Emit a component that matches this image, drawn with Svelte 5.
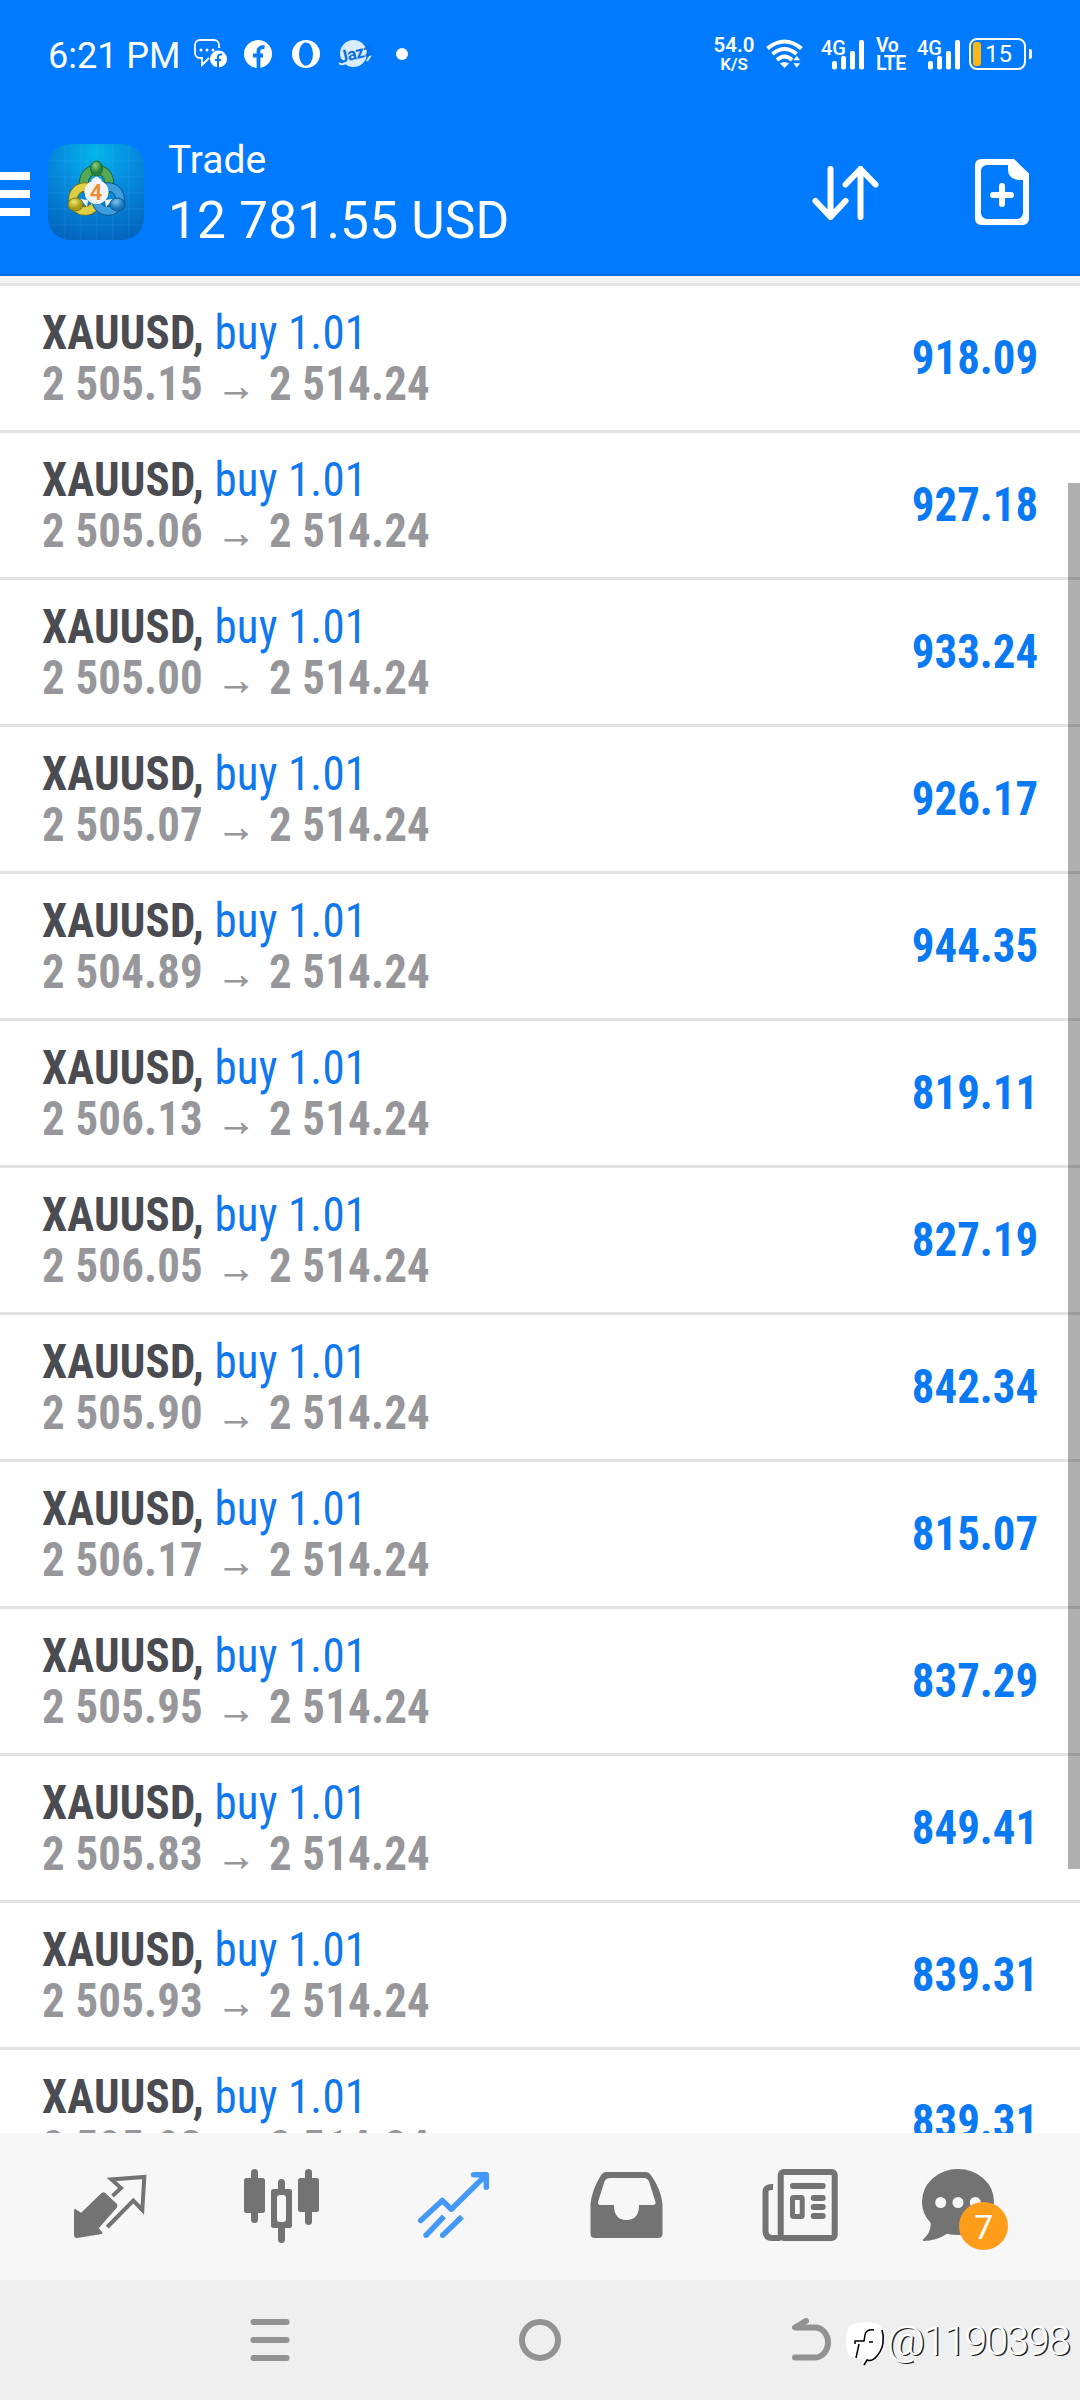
<script lang="ts">
  interface Position {
    symbol: string;
    side: string;
    open: string;
    current: string;
    profit: string;
  }

  const balance = '12 781.55 USD';
  const unread = 7;

  const rows: [string, string][] = [
    ['2 505.15', '918.09'],
    ['2 505.06', '927.18'],
    ['2 505.00', '933.24'],
    ['2 505.07', '926.17'],
    ['2 504.89', '944.35'],
    ['2 506.13', '819.11'],
    ['2 506.05', '827.19'],
    ['2 505.90', '842.34'],
    ['2 506.17', '815.07'],
    ['2 505.95', '837.29'],
    ['2 505.83', '849.41'],
    ['2 505.93', '839.31'],
    ['2 505.93', '839.31']
  ];

  const positions: Position[] = rows.map(([open, profit]) => ({
    symbol: 'XAUUSD',
    side: 'buy 1.01',
    open,
    current: '2 514.24',
    profit
  }));
</script>

{#snippet signal()}
  <div class="signal">
    <span>4G</span>
    <svg width="32" height="30" viewBox="0 0 32 30" fill="#fff">
      <rect x="0" y="21" width="5" height="8.5" rx="2" />
      <rect x="9" y="16" width="5" height="13.5" rx="2" />
      <rect x="18" y="11" width="5" height="18.5" rx="2" />
      <rect x="27" y="0" width="5" height="29.5" rx="2" />
    </svg>
  </div>
{/snippet}

<div class="screen">
  <div class="status">
    <span class="time">6:21 PM</span>
    <svg class="s-chat" width="34" height="30" viewBox="0 0 34 30">
      <path d="M25 9V6a5 5 0 0 0-5-5H6a5 5 0 0 0-5 5v8a5 5 0 0 0 5 5h2v7l7-7" fill="none" stroke="#fff" stroke-width="1.8" />
      <g fill="#fff">
        <circle cx="7" cy="11" r="1.5" />
        <circle cx="13" cy="11" r="1.5" />
        <circle cx="19" cy="11" r="1.5" />
        <circle cx="24.5" cy="20" r="8.5" />
      </g>
      <path d="M24 29V18q0-3 4-2.5M21 21h6" fill="none" stroke="#007aff" stroke-width="2" />
    </svg>
    <svg class="s-fb" width="28" height="28" viewBox="0 0 28 28">
      <circle cx="14" cy="14" r="14" fill="#fff" />
      <path d="M14.5 28V11.5q0-5 6-4.2M9 15.5h10" fill="none" stroke="#007aff" stroke-width="3.8" />
    </svg>
    <svg class="s-opera" width="28" height="28" viewBox="0 0 28 28">
      <circle cx="14" cy="14" r="14" fill="#fff" />
      <ellipse cx="14" cy="14" rx="7" ry="11.5" fill="#007aff" />
    </svg>
    <svg class="s-jazz" width="34" height="30" viewBox="0 0 34 30">
      <circle cx="15.5" cy="14.5" r="13.5" fill="#d9ecff" />
      <path d="M1 24q4 3 7-1M29 22l4-6" fill="none" stroke="#d9ecff" stroke-width="2" />
      <text x="2" y="24" transform="rotate(-14 3 24)">Jazz</text>
    </svg>
    <svg class="s-dot" width="12" height="12" viewBox="0 0 12 12"><circle cx="6" cy="6" r="6" fill="#fff" /></svg>

    <div class="speed"><b>54.0</b><span>K/S</span></div>
    <svg class="wifi" width="38" height="30" viewBox="0 0 38 30">
      <g fill="none" stroke="#fff" stroke-width="4">
        <path d="M1.5 9.5Q18.5-4.5 35.5 9.5" />
        <path d="M6.5 15Q18.5 5 30.5 15" />
        <path d="M11 21Q18.5 14 26 21" />
      </g>
      <path d="M14 24.5q4.5-3 9 0L18.5 29z" fill="#fff" />
      <path d="M27 21.5l3.8-5 3.7 5zM27 24l3.8 5 3.7-5z" fill="#fff" stroke="#007aff" stroke-width=".5" />
    </svg>
    {@render signal()}
    <div class="volte"><span>Vo</span><span>LTE</span></div>
    {@render signal()}
    <div class="battery"><i></i><span>15</span></div>
    <div class="nub"></div>
  </div>

  <header>
    <div class="menu"><i></i><i></i><i></i></div>
    <svg class="logo" width="96" height="96" viewBox="0 0 96 96">
      <defs>
        <radialGradient id="bg" cx=".5" cy=".1" r=".95">
          <stop offset="0" stop-color="#04b5ea" />
          <stop offset=".4" stop-color="#058edf" />
          <stop offset="1" stop-color="#0363bd" />
        </radialGradient>
        <radialGradient id="green" cx=".4" cy=".3"><stop offset="0" stop-color="#8fd07c" /><stop offset="1" stop-color="#23813a" /></radialGradient>
        <radialGradient id="yellow" cx=".4" cy=".3"><stop offset="0" stop-color="#f3ea6a" /><stop offset="1" stop-color="#a99b17" /></radialGradient>
        <radialGradient id="blue" cx=".4" cy=".3"><stop offset="0" stop-color="#7cc8f4" /><stop offset="1" stop-color="#1873b8" /></radialGradient>
      </defs>
      <rect width="96" height="96" rx="22" fill="url(#bg)" />
      <path d="M17 1v94M33 0v96M49 0v96M65 0v96M81 1v94M1 17h94M0 33h96M0 49h96M0 65h96M1 81h94" stroke="#6fd0ff" stroke-opacity=".15" />
      <g fill="none">
        <circle cx="48.5" cy="38" r="12.5" stroke="#1d6b31" stroke-width="10" />
        <circle cx="48.5" cy="38" r="12.5" stroke="#53a955" stroke-width="8" />
        <circle cx="37" cy="55" r="12" stroke="#7f7612" stroke-width="9.5" />
        <circle cx="37" cy="55" r="12" stroke="#dccf45" stroke-width="7.5" />
        <circle cx="60" cy="55" r="12" stroke="#0d5592" stroke-width="9.5" />
        <circle cx="60" cy="55" r="12" stroke="#3d9fdd" stroke-width="7.5" />
      </g>
      <path d="M43 36l5.5-4 5.5 4-5.5 5zM32 55l8 1-1 7zM65 55l-8 1 1 7z" fill="#eef5f5" />
      <ellipse cx="48.5" cy="24.5" rx="6" ry="7.5" fill="url(#green)" stroke="#1d6b31" />
      <ellipse cx="27.5" cy="60.5" rx="7.5" ry="6.5" fill="url(#yellow)" stroke="#7f7612" />
      <ellipse cx="69.5" cy="60.5" rx="7.5" ry="6.5" fill="url(#blue)" stroke="#0d5592" />
      <circle cx="48.5" cy="48" r="12" fill="#f4f4f4" />
      <text x="48" y="56">4</text>
    </svg>
    <div class="title">
      <span class="name">Trade</span>
      <span class="amount">{balance}</span>
    </div>
    <svg class="sort" width="68" height="56" viewBox="0 0 68 56" fill="none" stroke="#fff" stroke-width="6" stroke-linecap="round" stroke-linejoin="round">
      <path d="M18.5 4v48M3.5 36l15 16 15-16M48.5 52V4M33.5 19.5L48.5 4l15 15.5" />
    </svg>
    <svg class="new-order" width="54" height="66" viewBox="0 0 54 66">
      <path d="M6 0h33l15 14.5V60a6 6 0 0 1-6 6H6a6 6 0 0 1-6-6V6a6 6 0 0 1 6-6zM12 6a6 6 0 0 0-6 6v42a6 6 0 0 0 6 6h30a6 6 0 0 0 6-6V21h-5q-10-2-10-10V6z" fill="#fff" fill-rule="evenodd" />
      <path d="M27 27v18M18 36h18" stroke="#fff" stroke-width="6" stroke-linecap="round" />
    </svg>
  </header>

  <main>
    <ul>
      {#each positions as p}
        <li>
          <div class="deal">
            <div class="line"><b>{p.symbol},</b> <span>{p.side}</span></div>
            <div class="line prices">{p.open} <i>→</i> {p.current}</div>
          </div>
          <div class="profit">{p.profit}</div>
        </li>
      {/each}
    </ul>
    <div class="scrollbar"></div>
  </main>

  <nav class="tabs">
    <svg width="96" height="96" viewBox="0 0 96 96">
      <path d="M13 52l6.3 4L40 36q1.5-1.2 3 0L54 46.5q1 1.2 0 2.5L35.5 70l4 5-24.5 4q-2 0-2-2z" fill="#737373" stroke="#737373" stroke-width="2" stroke-linejoin="round" />
      <path d="M50.5 38l8.5-8-9.5-8.5 32.8-2.5L80.3 52l-9-9.3L45.3 69" fill="none" stroke="#737373" stroke-width="4" />
    </svg>
    <svg width="96" height="96" viewBox="0 0 96 96" fill="#737373">
      <rect x="10" y="20" width="21" height="35" rx="2.5" />
      <rect x="17" y="11" width="7" height="54" rx="3.5" />
      <path d="M44 31v-6.5a3.5 3.5 0 0 1 7 0V31h4.5a2.5 2.5 0 0 1 2.5 2.5v34a2.5 2.5 0 0 1-2.5 2.5H51v11.5a3.5 3.5 0 0 1-7 0V70h-4.5a2.5 2.5 0 0 1-2.5-2.5v-34a2.5 2.5 0 0 1 2.5-2.5zM46 37a3 3 0 0 0-3 3v21a3 3 0 0 0 3 3h3a3 3 0 0 0 3-3V40a3 3 0 0 0-3-3z" fill-rule="evenodd" />
      <rect x="64" y="20" width="21" height="34" rx="2.5" />
      <rect x="71" y="11" width="7" height="56" rx="3.5" />
    </svg>
    <svg width="96" height="96" viewBox="0 0 96 96" fill="none" stroke="#4499f8" stroke-width="5.5">
      <path d="M14.7 62.5l21.6-20 9 8.7L80 17M67.7 16.7h12.6v12.6" stroke-linecap="round" stroke-linejoin="round" />
      <path d="M20 77.3l18-19M36.7 77.3l19.3-18.5" />
      <path d="M20 77.3v0M36.7 77.3v0" stroke-linecap="round" />
    </svg>
    <svg width="96" height="96" viewBox="0 0 96 96">
      <path d="M28 14h40q3 0 4.5 2.5Q83 31 84.5 46v29.5q0 4.5-4.5 4.5H17q-4.5 0-4.5-4.5V46Q14 31 23.5 16.5 25 14 28 14zM32 20q-4 0-5.5 3.5L20 44q-.5 3 2.5 3H36q0 15 12.5 15T61 47h14q3 0 2.5-3L71 23.5Q69.5 20 66 20z" fill="#737373" fill-rule="evenodd" />
    </svg>
    <svg width="96" height="96" viewBox="0 0 96 96" fill="none" stroke="#737373" stroke-width="6">
      <rect x="30.7" y="14" width="54" height="66" rx="3" />
      <path d="M23 29q-7.5-.5-7.5 5v39q0 7 7 7h8" />
      <path d="M43 28h29.7M63.7 40h9M63.7 49h9M63.7 58h9" stroke-linecap="round" />
      <rect x="42.5" y="39.5" width="9.7" height="19" rx="1" stroke-width="5" />
    </svg>
    <div class="chat-tab">
      <svg width="96" height="96" viewBox="0 0 96 96" fill="#737373">
        <path d="M8.7 65Q0 56 0 44 0 30 10.5 20.5T36 11q15 0 25.5 9.5T72 44 61.5 67.5 36 77q-6 0-11-1.2Q14 83 2 83q-2.5-.5 0-2.5 7-6 6.7-15.5z" />
        <g fill="#f7f7f7">
          <circle cx="18.7" cy="44.5" r="5.5" />
          <circle cx="36" cy="44.5" r="5.5" />
          <circle cx="53.3" cy="44.5" r="5.5" />
        </g>
      </svg>
      <span class="badge">{unread}</span>
    </div>
  </nav>

  <div class="system">
    <svg class="recents" width="40" height="42" viewBox="0 0 40 42" stroke="#929292" stroke-width="6" stroke-linecap="round"><path d="M3.5 3h33M3.5 21h33M3.5 39h33" /></svg>
    <svg class="home" width="42" height="42" viewBox="0 0 42 42"><circle cx="21" cy="21" r="18" fill="none" stroke="#929292" stroke-width="6" /></svg>
    <svg class="back" width="40" height="44" viewBox="0 0 40 44" fill="none" stroke="#929292" stroke-width="6" stroke-linecap="round" stroke-linejoin="round"><path d="M14 4L3 10.5h20a13 15 0 0 1 0 30H3" /></svg>
    <div class="mark">
      <svg width="40" height="44" viewBox="0 0 40 44">
        <path d="M3 6q4-6 17-6t16 5 3 15-5 14-11 4q-3 0-4 4l-1-5Q4 38 2 29t1-23z" fill="#fff" />
        <path d="M37 8q2 6 1 13t-6 13-10 4l-3 5" fill="none" stroke="#000" stroke-width="1.6" />
        <path d="M29 8q-8-1-9 5l-1 6h-9v3M14 22l-3 14M24 20h4" fill="none" stroke="#000" stroke-width="1.5" />
      </svg>
      <span>@1190398</span>
    </div>
  </div>
</div>

<style>
  :global(body) {
    margin: 0;
    background: #fff;
  }
  .screen {
    width: 1080px;
    height: 2400px;
    display: flex;
    flex-direction: column;
    overflow: hidden;
    font-family: Roboto, sans-serif;
    background: #fff;
  }
  svg {
    display: block;
    flex: none;
  }

  .status {
    height: 108px;
    box-sizing: border-box;
    display: flex;
    align-items: center;
    padding-left: 48px;
    background: #007aff;
    color: #fff;
  }
  .time {
    width: 146px;
    font-size: 36px;
    line-height: 44px;
    white-space: nowrap;
    padding-top: 3px;
    box-sizing: border-box;
  }
  .s-fb {
    margin-left: 16px;
  }
  .s-opera {
    margin-left: 20px;
  }
  .s-jazz {
    margin-left: 18px;
  }
  .s-jazz text {
    font-size: 17px;
    font-weight: 700;
    fill: #0a6fe0;
    letter-spacing: -0.5px;
  }
  .s-dot {
    margin-left: 24px;
  }
  .speed {
    width: 42px;
    margin-left: 305px;
    display: flex;
    flex-direction: column;
    align-items: center;
    font-weight: 600;
  }
  .speed b {
    font-size: 20.5px;
    line-height: 20px;
    font-weight: 600;
  }
  .speed span {
    font-size: 17px;
    line-height: 18px;
  }
  .wifi {
    margin-left: 11px;
  }
  .signal {
    display: flex;
    width: 42px;
    height: 32px;
    margin-left: 18px;
    align-items: flex-end;
    justify-content: flex-end;
  }
  .signal span {
    font-size: 20px;
    line-height: 20px;
    font-weight: 500;
    align-self: flex-start;
    white-space: nowrap;
    margin-right: -14px;
  }
  .volte {
    width: 31px;
    margin-left: 12px;
    display: flex;
    flex-direction: column;
    font-size: 19.5px;
    line-height: 18px;
    font-weight: 600;
    letter-spacing: -0.5px;
    padding-top: 1px;
  }
  .volte + .signal {
    margin-left: 11px;
  }
  .battery {
    width: 57px;
    height: 32px;
    box-sizing: border-box;
    border: 2px solid #fff;
    border-radius: 8px;
    margin-left: 9px;
    display: flex;
    align-items: center;
    padding-left: 2px;
    font-size: 24px;
    line-height: 28px;
  }
  .battery i {
    width: 8px;
    height: 24px;
    border-radius: 3px;
    background: #f9b813;
    margin-right: 4px;
  }
  .nub {
    width: 3px;
    height: 10px;
    background: #fff;
    margin-left: 3px;
    border-radius: 0 2px 2px 0;
  }

  header {
    height: 168px;
    box-sizing: border-box;
    border-bottom: 2px solid #006bdf;
    background: #007aff;
    color: #fff;
    display: flex;
    align-items: flex-start;
  }
  .menu {
    width: 30px;
    margin-top: 64px;
    display: flex;
    flex-direction: column;
    gap: 10px;
  }
  .menu i {
    height: 8px;
    background: #fff;
  }
  .logo {
    margin: 36px 0 0 18px;
  }
  .logo text {
    font-size: 22px;
    font-weight: 600;
    fill: #f28a2e;
    text-anchor: middle;
  }
  .title {
    width: 644px;
    margin: 30px 0 0 24px;
    display: flex;
    flex-direction: column;
  }
  .name {
    font-size: 39px;
    line-height: 44px;
  }
  .amount {
    font-size: 51.5px;
    line-height: 60px;
    margin-top: 9px;
    letter-spacing: 0.15px;
  }
  .sort {
    margin-top: 57px;
  }
  .new-order {
    margin: 51px 0 0 95px;
  }

  main {
    position: relative;
    height: 1857px;
    overflow: hidden;
  }
  ul {
    list-style: none;
    margin: 0;
    padding: 0;
    border-top: 7px solid #f5f5f5;
  }
  li {
    height: 147px;
    box-sizing: border-box;
    border-top: 3px solid #e3e3e5;
    padding: 0 42px;
    display: flex;
    justify-content: space-between;
    font-size: 48px;
    font-stretch: 75%;
    letter-spacing: 0.2px;
  }
  .deal {
    padding-top: 21px;
    transform: scaleX(0.935);
    transform-origin: left;
  }
  .line {
    line-height: 51px;
    white-space: nowrap;
    color: #4b4b52;
  }
  .line span {
    color: #0f78ee;
  }
  .prices {
    color: #97979b;
    font-weight: 700;
  }
  .prices i {
    display: inline-block;
    margin: 0 3px 0 4px;
    font: 41px/1 'Liberation Sans', sans-serif;
    letter-spacing: 0;
    -webkit-text-stroke: 0.8px #97979b;
  }
  .profit {
    line-height: 143px;
    font-weight: 700;
    letter-spacing: 0;
    color: #0a79f4;
    transform: scaleX(0.935);
    transform-origin: right;
  }
  .scrollbar {
    position: absolute;
    right: 0;
    top: 207px;
    width: 12px;
    height: 1386px;
    background: rgba(0, 0, 0, 0.31);
  }

  .tabs {
    height: 147px;
    box-sizing: border-box;
    padding: 25px 24px 0;
    display: grid;
    grid-template-columns: repeat(6, 172px);
    justify-items: center;
    background: #f7f7f7;
  }
  .chat-tab {
    position: relative;
  }
  .badge {
    position: absolute;
    left: 37px;
    top: 44px;
    width: 49px;
    height: 48px;
    border-radius: 50%;
    background: #ff9d1b;
    color: #fff;
    font-size: 34px;
    line-height: 50px;
    text-align: center;
  }

  .system {
    height: 120px;
    display: flex;
    align-items: flex-start;
    background: #efefef;
  }
  .recents {
    margin: 39px 0 0 250px;
  }
  .home {
    margin: 39px 0 0 229px;
  }
  .back {
    margin: 37px 0 0 231px;
  }
  .mark {
    margin: 42px 0 0 13px;
    display: flex;
  }
  .mark span {
    margin-left: 2px;
    font-size: 41.5px;
    line-height: 38px;
    font-weight: 300;
    letter-spacing: -2.2px;
    color: #fff;
    text-shadow: 1.5px 1px 0 #222;
  }
</style>
